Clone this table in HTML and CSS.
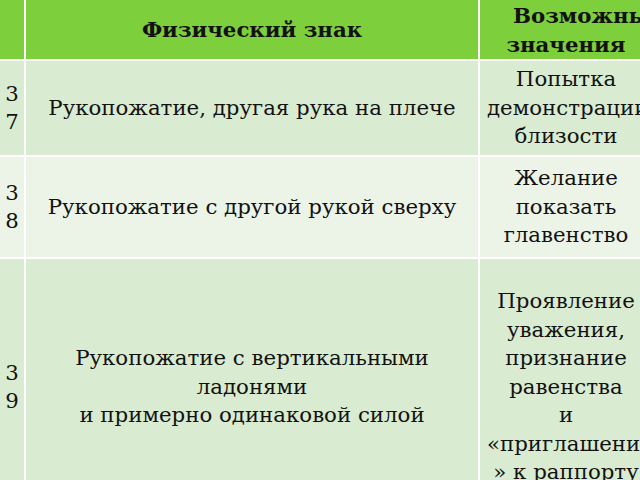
FILE: index.html
```html
<!DOCTYPE html>
<html lang="ru">
<head>
<meta charset="utf-8">
<title>Физический знак</title>
<link rel="stylesheet" href="styles.css">
</head>
<body>
<div class="table">
  <div class="cell head num"></div>
  <div class="cell head"><div class="txt">Физический знак</div></div>
  <div class="cell head right"><div class="txt"><span class="lead">Возможные</span><br>значения</div></div>

  <div class="cell band num"><div class="txt">37</div></div>
  <div class="cell band"><div class="txt">Рукопожатие, другая рука на плече</div></div>
  <div class="cell band right"><div class="txt">Попытка<br>демонстрации<br>близости</div></div>

  <div class="cell alt num"><div class="txt">38</div></div>
  <div class="cell alt"><div class="txt">Рукопожатие с другой рукой сверху</div></div>
  <div class="cell alt right"><div class="txt">Желание<br>показать<br>главенство</div></div>

  <div class="cell band num"><div class="txt">39</div></div>
  <div class="cell band"><div class="txt">Рукопожатие с вертикальными<br>ладонями<br>и примерно одинаковой силой</div></div>
  <div class="cell band right"><div class="txt">Проявление<br>уважения,<br>признание<br>равенства<br>и<br>«приглашение<br>» к раппорту</div></div>
</div>
</body>
</html>
```

FILE: styles.css
```css
html, body {
  margin: 0;
  padding: 0;
  width: 640px;
  height: 480px;
  overflow: hidden;
  background: #ffffff;
}

.table {
  display: grid;
  grid-template-columns: 24px 452px 172px;
  grid-template-rows: 59px 94px 100px 256px;
  gap: 2px;
  width: 652px;
  background: #ffffff;
  font-family: "DejaVu Serif", "Liberation Serif", serif;
  color: #121212;
}

.cell {
  display: flex;
  flex-direction: column;
  justify-content: center;
  text-align: center;
  font-size: 21.3px;
  line-height: 28.5px;
  padding: 0 7px;
  min-width: 0;
  white-space: nowrap;
}

.txt {
  width: 100%;
}

.num {
  padding: 0;
  white-space: normal;
  word-break: break-all;
}

.head {
  background: #7ecf3c;
  font-weight: bold;
  line-height: 29px;
}

.lead {
  padding-left: 26px;
}

.band {
  background: #d9ebd0;
}

.alt {
  background: #ecf4e8;
}
```
